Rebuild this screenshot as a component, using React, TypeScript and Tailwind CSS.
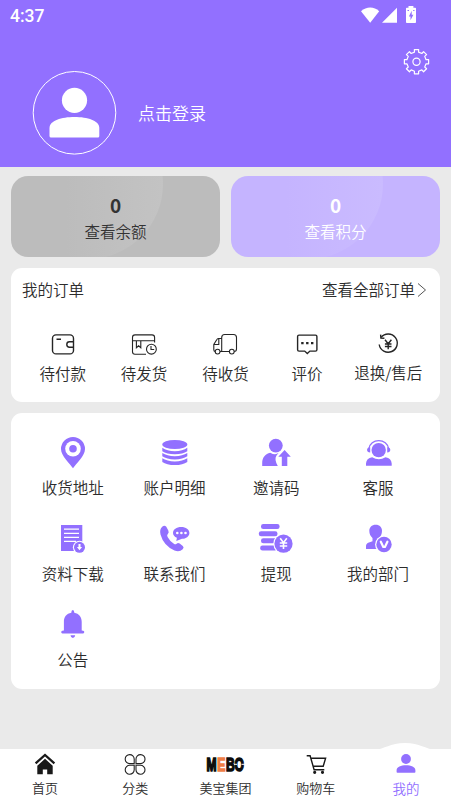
import React from 'react';
import clsx from 'clsx';

const PURPLE = '#9270ff';

function gearPath(cx: number, cy: number) {
    const pts: string[] = [];
    for (let i = 0; i < 8; i++) {
        const steps: [number, number][] = [[-12, 9.8], [-10, 12.3], [10, 12.3], [12, 9.8]];
        steps.forEach(([deg, r]) => {
            const a = ((i * 45 + deg) * Math.PI) / 180;
            pts.push(`${(cx + r * Math.cos(a)).toFixed(2)} ${(cy + r * Math.sin(a)).toFixed(2)}`);
        });
    }
    return `M${pts.join('L')}Z`;
}

function StatusBar() {
    return (
        <div className="flex h-8 items-center justify-between pl-2.5 pr-[34px] text-white">
            <span className="font-[Roboto] text-[17.5px] font-medium leading-8">4:37</span>
            <svg width="57" height="20" viewBox="0 0 57 20" fill="currentColor">
                <path d="M1 5.2C6.5 .4 14 .4 19.2 5.2L10.2 16.8Z" />
                <path d="M37 1.8V16.8H22Z" />
                <path d="M46.8 1.7H48.5V0H53.4V1.7H55.2Q56 1.7 56 2.6V16Q56 16.9 55.2 16.9H46.8Q46 16.9 46 16V2.6Q46 1.7 46.8 1.7Z" />
                <path d="M51.7 4.8L48.9 10.4H50.5V14.2L53.4 8.8H51.7Z" fill={PURPLE} />
                <path d="M47.5 4.5h1.5M53.2 4.5h1.3" stroke={PURPLE} />
            </svg>
        </div>
    );
}

function Header() {
    return (
        <header className="h-[167px] bg-[#9270ff]">
            <StatusBar />
            <div className="flex h-[39px] justify-end pr-[20px] pt-[15px]">
                <svg width="29" height="29" viewBox="0 0 29 29" fill="none" stroke="#fff" strokeWidth="1.2" strokeLinejoin="round">
                    <path d={gearPath(14.5, 14.7)} />
                    <circle cx="14.5" cy="14.7" r="3.6" />
                </svg>
            </div>
            <div className="flex items-center pl-[32px]">
                <svg width="85" height="85" viewBox="0 0 85 85">
                    <circle cx="42.5" cy="41.8" r="41.3" fill="none" stroke="#fff" strokeWidth="1" />
                    <circle cx="42.5" cy="29.3" r="12.6" fill="#fff" />
                    <path d="M17.5 57C17.5 49.5 29.5 46 42.5 46S67.3 49.5 67.3 57V65Q67.3 66.5 65.8 66.5H19Q17.5 66.5 17.5 65Z" fill="#fff" />
                </svg>
                <span className="-mt-px ml-[21px] text-[17px] text-white">点击登录</span>
            </div>
        </header>
    );
}

function BalanceCard({ label, purple }: { label: string; purple?: boolean }) {
    return (
        <div
            className={clsx(
                'relative h-[81px] flex-1 overflow-hidden rounded-[17px] text-center',
                purple ? 'bg-[#c5b4ff] text-white' : 'bg-[#bcbcbc] text-[#333]'
            )}
        >
            <div
                className={clsx(
                    'absolute -top-[67px] left-[2px] size-[150px] rounded-full bg-linear-to-r from-transparent from-35%',
                    purple ? 'to-[#cabbff]' : 'to-[#c3c3c3]'
                )}
            />
            <p className="relative mt-[17px] font-['Noto_Sans_CJK_SC',sans-serif] text-[19px] font-bold leading-6">0</p>
            <p className="relative mt-[2px] text-[15.5px] leading-6">{label}</p>
        </div>
    );
}

const orders = [
    {
        label: '待付款',
        icon: (
            <>
                <rect x="5.5" y="6.9" width="21" height="19" rx="3.5" />
                <path d="M9.5 11.3h4.5M26.5 13.8h-4a2.7 2.7 0 0 0 0 5.4h4" />
            </>
        ),
    },
    {
        label: '待发货',
        icon: (
            <g strokeWidth="1.1">
                <path d="M18 26.2H7a2.5 2.5 0 0 1-2.5-2.5V9.5A2.6 2.6 0 0 1 7 6.9h17a2.6 2.6 0 0 1 2.6 2.6v5M4.5 12.7h22M8.4 13v6.7l2.2-1.9 2.2 1.9V13" />
                <circle cx="23.4" cy="21.2" r="4.9" />
                <path d="M23 18v3.5h3.2" />
            </g>
        ),
    },
    {
        label: '待收货',
        icon: (
            <g strokeWidth="1.1">
                <path d="M11 23.5h9.3M25.2 23.5q2.3 0 2.3-2.5V9.5q0-3-3-3h-8.8q-3 0-3 3v13.7M12.5 10.5H9.3Q8.3 10.5 7.7 11.8L4.8 16.5v5.3q0 1.7 1.4 1.7M5 16.5h4.8v-6" />
                <circle cx="8.6" cy="23.6" r="2.4" />
                <circle cx="22.8" cy="23.6" r="2.4" />
            </g>
        ),
    },
    {
        label: '评价',
        icon: (
            <>
                <path d="M8 7.1h16.5q1.4 0 1.4 1.4v13.2q0 1.4-1.4 1.4h-5.6L16.3 25.6l-2.6-2.5H8q-1.4 0-1.4-1.4V8.5Q6.6 7.1 8 7.1Z" />
                <path d="M10.2 15.1h2.4M15.1 15.1h2.4M20 15.1h2.4" strokeWidth="2.4" />
            </>
        ),
    },
    {
        label: '退换/售后',
        icon: (
            <>
                <path d="M9.1 9.4A9.1 9.1 0 1 1 7.2 16.5" />
                <path d="M8.6 6.6l.3 3.4 3.5.2" />
                <path d="M13 11.8l3.2 4 3.2-4M16.2 15.8v5.4M12.9 16h6.6M12.9 18.5h6.6" />
            </>
        ),
    },
];

function OrderPanel() {
    return (
        <section className="mt-[11px] h-[134px] rounded-[11px] bg-white px-[11px]">
            <div className="flex h-[43px] items-center justify-between text-[15.5px]">
                <span>我的订单</span>
                <span className="flex items-center">
                    查看全部订单
                    <svg width="14" height="16" viewBox="0 0 14 16" fill="none" stroke="#555" strokeWidth="1">
                        <path d="M3 1.5l7.5 6.5L3 14.5" />
                    </svg>
                </span>
            </div>
            <div className="grid grid-cols-5 pt-[17px]">
                {orders.map((o, i) => (
                    <div key={o.label} className="flex flex-col items-center whitespace-nowrap">
                        <svg width="32" height="32" viewBox="0 0 32 32" fill="none" stroke="#252525" strokeWidth="1.4">
                            {o.icon}
                        </svg>
                        <span className={clsx('text-[15.5px] leading-6', i === 4 ? '' : 'pt-px')}>{o.label}</span>
                    </div>
                ))}
            </div>
        </section>
    );
}

const tools = [
    {
        label: '收货地址',
        icon: (
            <>
                <path d="M20 35.3C17 30.5 8 23 8 16a12 12 0 0 1 24 0c0 7-9 14.5-12 19.3Z" />
                <circle cx="20" cy="15.8" r="7.8" fill="#fff" />
                <circle cx="20" cy="15.8" r="3.8" />
            </>
        ),
    },
    {
        label: '账户明细',
        icon: (
            <>
                <ellipse cx="19.8" cy="11.5" rx="12.5" ry="4.5" />
                <path d="M7.3 14.8Q12 18.2 19.8 18.2T32.3 14.8V18.3Q28 21.2 19.8 21.2T7.3 18.3Z" />
                <path d="M7.3 20.1Q12 23.2 19.8 23.2T32.3 20.1V23.3Q28 26.4 19.8 26.4T7.3 23.3Z" />
                <path d="M7.3 25.3Q12 28.4 19.8 28.4T32.3 25.3V28.9Q28 32 19.8 32T7.3 28.9Z" />
            </>
        ),
    },
    {
        label: '邀请码',
        icon: (
            <>
                <circle cx="19.8" cy="12.6" r="6.9" />
                <path d="M6.2 33V30C6.2 24.5 9.5 20.5 14.2 19.7Q19.5 22.8 22.6 19.8L20.4 22.7Q18 26 21.8 33Z" />
                <path d="M28.6 17l6.2 6.8h-3.5V33h-5.5v-9.2h-3.5Z" />
            </>
        ),
    },
    {
        label: '客服',
        icon: (
            <>
                <circle cx="20.7" cy="17.1" r="7.2" />
                <path d="M10.8 16C12 4.8 29.5 4.8 30.7 16" fill="none" stroke="currentColor" strokeWidth="1.4" />
                <path d="M12.2 14.2v5.3c-4.2 0-4.2-5.3 0-5.3ZM29.2 14.2v5.3c4.2 0 4.2-5.3 0-5.3Z" />
                <path d="M8 32.7V30.5Q8.3 25.3 14.2 24.2Q20.8 28.3 27.5 24.2Q33.4 25.3 33.7 30.5V32.7Z" />
            </>
        ),
    },
    {
        label: '资料下载',
        icon: (
            <>
                <path d="M8 6h21.3v26H8Z" />
                <path d="M11 10.2h15M11 14.3h15M11 18.3h15M11 22.4h12" stroke="#fff" strokeWidth="1.2" />
                <circle cx="26.5" cy="28.3" r="6.6" fill="#fff" />
                <circle cx="26.5" cy="28.3" r="5.5" />
                <path d="M25.5 25h2v3h1.6l-2.6 3.2-2.6-3.2h1.6Z" fill="#fff" />
            </>
        ),
    },
    {
        label: '联系我们',
        icon: (
            <>
                <path d="M7.2 7.8Q9.5 5.8 11.3 7.8L13.3 11.5Q14.3 13.5 12.8 15Q11.6 16.2 12.6 18Q15 22.6 19.2 25Q20.5 25.700 21.600 24.700Q23 23.300 24.700 24.500L27.800 27Q29.500 28.500 27.700 30.300Q24.500 33.500 19.500 31.600Q8.500 26.500 5.500 15.500Q4.300 10.500 7.200 7.800Z" />
                <path d="M26.2 8c4.700 0 8.200 2.600 8.200 5.900s-3.400 5.800-7.400 5.900L21.300 22l.6-3.200c-2.400-1.100-3.900-2.800-3.900-4.900C18 10.600 21.500 8 26.200 8Z" />
                <circle cx="22.3" cy="14" r="1.3" fill="#fff" />
                <circle cx="26.4" cy="14" r="1.3" fill="#fff" />
                <circle cx="30.5" cy="14" r="1.3" fill="#fff" />
            </>
        ),
    },
    {
        label: '提现',
        icon: (
            <>
                <rect x="5" y="5" width="18.6" height="5" rx="2.3" />
                <rect x="2.8" y="12.2" width="18.7" height="5" rx="2.3" />
                <rect x="5" y="19.3" width="17" height="5" rx="2.3" />
                <rect x="4.2" y="26.5" width="17" height="5" rx="2.3" />
                <circle cx="27.5" cy="24.7" r="10.2" fill="#fff" />
                <circle cx="27.5" cy="24.7" r="9.1" />
                <path d="M24.2 19.3l3.3 4.400 3.300-4.400M27.500 23.700v6.300M23.800 24h7.400M23.800 27h7.400" fill="none" stroke="#fff" strokeWidth="1.6" />
            </>
        ),
    },
    {
        label: '我的部门',
        icon: (
            <>
                <path d="M17.7 5.7c4 0 6.3 2.6 6.3 6.1 0 3.2-1.2 5.7-3 7.3v4.2L23 30H8v-3.200q.3-2.600 3.700-3.500l2.800-1V19c-1.900-1.600-3.200-4.100-3.200-7.200 0-3.500 2.400-6.100 6.400-6.100Z" />
                <circle cx="26" cy="25.5" r="8.9" fill="#fff" />
                <circle cx="26" cy="25.5" r="7.7" />
                <path d="M22.8 22.700l2.500 5.300h1.600l2.500-5.300" fill="none" stroke="#fff" strokeWidth="2.2" strokeLinecap="round" strokeLinejoin="round" />
            </>
        ),
    },
    {
        label: '公告',
        icon: (
            <>
                <path d="M18.3 7.700q0-2.700 1.500-2.700t1.500 2.700c4.600.8 7.400 4.300 7.400 9V25.500l1.500.2q1.100.2 1.100 1.400t-1.200 1.300H9.400q-1.200 0-1.200-1.300t1.200-1.400l1.500-.2V16.700c0-4.700 2.600-8.200 7.400-9Z" />
                <path d="M17.5 30.200h4.700q-.3 2.800-2.350 2.800t-2.350-2.800Z" />
            </>
        ),
    },
];

function ToolPanel() {
    return (
        <section className="mt-[11px] grid h-[276px] auto-rows-[86px] grid-cols-4 rounded-[11px] bg-white px-[11px] pt-5">
            {tools.map((t) => (
                <div key={t.label} className="flex flex-col items-center">
                    <svg width="40" height="40" viewBox="0 0 40 40" fill="currentColor" className="text-[#9270ff]">
                        {t.icon}
                    </svg>
                    <span className="mt-[2px] text-[15.5px] leading-6">{t.label}</span>
                </div>
            ))}
        </section>
    );
}

const tabs = [
    {
        label: '首页',
        icon: (
            <>
                <path d="M10.6 14.4L20 6l9.4 8.4" fill="none" stroke="#191919" strokeWidth="2.3" />
                <path d="M20 9.8l7.7 7V25.2h-5.5v-4.7h-4.4v4.7h-5.5V16.8Z" fill="#191919" />
            </>
        ),
    },
    {
        label: '分类',
        icon: (
            <g fill="none" stroke="#222" strokeWidth="1.1">
                <path d="M19.2 14.6H14.8A4.5 4.5 0 1 1 19.2 10.1Z" />
                <path d="M21 14.6h4.4A4.5 4.5 0 1 0 21 10.1Z" />
                <path d="M19.2 16.3H14.8A4.5 4.5 0 1 0 19.2 20.8Z" />
                <path d="M21 16.3h4.4A4.5 4.5 0 1 1 21 20.8Z" />
            </g>
        ),
    },
    {
        label: '美宝集团',
        icon: (
            <>
                <text
                    x="1.5"
                    y="21.5"
                    textLength="37.5"
                    lengthAdjust="spacingAndGlyphs"
                    fontFamily="Liberation Sans"
                    fontWeight="bold"
                    fontSize="18.5"
                    fill="#0b0b0b"
                    stroke="#0b0b0b"
                    strokeWidth="1.6"
                >
                    M<tspan dx="1" fill="#ef7d45" stroke="#ef7d45">E</tspan><tspan dx="1">BO</tspan>
                </text>
                <path d="M29 15.3h3M36.500 15.3h4" stroke="#fff" strokeWidth="1" />
            </>
        ),
    },
    {
        label: '购物车',
        icon: (
            <g fill="none" stroke="#191919" strokeWidth="1.4">
                <path d="M10.7 6.7h3.4l4 14h10.2M15.2 9.3H29.6L27.2 17.3H17.2" />
                <circle cx="18.7" cy="23.3" r=".9" fill="#191919" />
                <circle cx="26.5" cy="23.3" r=".9" fill="#191919" />
            </g>
        ),
    },
    {
        label: '我的',
        icon: (
            <g fill={PURPLE}>
                <circle cx="20" cy="10" r="4.9" />
                <path d="M10.6 21.2C10.6 18 15 16.3 20 16.3s9.4 1.7 9.4 4.9V23q0 .8-.8.8H11.4q-.8 0-.8-.8Z" />
            </g>
        ),
    },
];

function TabBar() {
    return (
        <nav className="relative mt-auto h-[53px] bg-white">
            <svg className="absolute -top-[6px] right-[16px]" width="60" height="7" viewBox="0 0 64 7" preserveAspectRatio="none" fill="#fff">
                <path d="M0 7C10 6 16 0 32 0S54 6 64 7Z" />
            </svg>
            <div className="relative grid grid-cols-5">
                {tabs.map((t, i) => (
                    <div key={t.label} className="flex flex-col items-center">
                        <svg width="40" height="29" viewBox="0 0 40 29" className="overflow-visible">
                            {t.icon}
                        </svg>
                        <span className={clsx('leading-5', i === 4 ? 'text-[13.5px] text-[#9270ff]' : 'text-[13px]')}>{t.label}</span>
                    </div>
                ))}
            </div>
        </nav>
    );
}

export default function App() {
    return (
        <div className="flex h-[802px] w-[451px] flex-col overflow-hidden bg-[#eaeaea] font-['Noto_Sans_CJK_SC',sans-serif] font-[350] text-[#2c2c2c]">
            <Header />
            <main className="px-[11px] pt-[9px]">
                <div className="flex gap-[11px]">
                    <BalanceCard label="查看余额" />
                    <BalanceCard label="查看积分" purple />
                </div>
                <OrderPanel />
                <ToolPanel />
            </main>
            <TabBar />
        </div>
    );
}
